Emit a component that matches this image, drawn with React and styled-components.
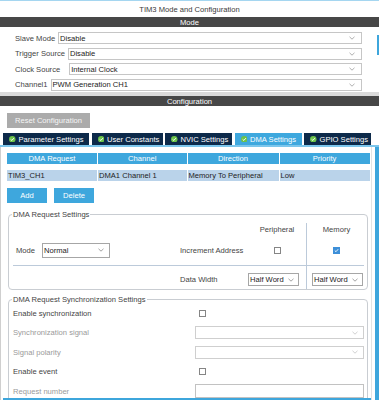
import React from "react";
import styled, { createGlobalStyle } from "styled-components";

const GlobalStyle = createGlobalStyle`
  html, body { margin: 0; padding: 0; background: #fff; }
  body {
    font-family: "Liberation Sans", Arial, sans-serif;
    font-size: 7.6px;
    color: #333;
    overflow: hidden;
  }
  * { box-sizing: border-box; }
`;

const Window = styled.div`
  width: 379px;
  height: 400px;
  overflow: hidden;
  border-top: 1px solid #a5d6f0;
  display: flex;
  flex-direction: column;
`;

const Title = styled.div`
  height: 16px;
  flex-shrink: 0;
  display: flex;
  align-items: center;
  justify-content: center;
  color: #3a3a3a;
`;

const SectionHeader = styled.div`
  height: 10px;
  flex-shrink: 0;
  background: #474747;
  color: #fff;
  display: flex;
  align-items: center;
  justify-content: center;
`;

const ModeArea = styled.div`
  display: flex;
  flex-shrink: 0;
  padding: 5px 0 1.5px 0;
`;

const ModeRows = styled.div`
  flex: 1;
  display: flex;
  flex-direction: column;
  gap: 3.5px;
  padding: 0 15px 0 15px;
`;

const ModeRow = styled.div`
  display: flex;
  align-items: center;
  height: 12px;
  gap: ${(p) => p.$gap ?? 3}px;
`;

const FieldLabel = styled.span`
  white-space: nowrap;
  color: ${(p) => (p.$muted ? "#9a9a9a" : "#444")};
`;

const ScrollThumb = styled.div`
  width: 2px;
  height: 20px;
  margin-top: 3px;
  background: #3ea6dc;
`;

const Divider = styled.div`
  height: 4px;
  flex-shrink: 0;
  background: #dadada;
`;

const ConfigBody = styled.div`
  flex: 1;
  display: flex;
  flex-direction: column;
  padding-top: 7px;
  min-height: 0;
`;

const ResetButton = styled.div`
  width: 83px;
  height: 15px;
  margin-left: 7px;
  background: #ababab;
  color: #f6f6f6;
  display: flex;
  align-items: center;
  justify-content: center;
  flex-shrink: 0;
`;

const TabBar = styled.div`
  display: flex;
  gap: 2.5px;
  margin: 5px 0 0 3px;
  height: 12px;
  flex-shrink: 0;
`;

const Tab = styled.div`
  width: ${(p) => p.$w}px;
  background: ${(p) => (p.$active ? "#3ea8de" : "#0d2a4a")};
  color: #fff;
  display: flex;
  align-items: center;
  gap: 3px;
  padding-left: 6px;
  white-space: nowrap;
`;

const TabLine = styled.div`
  height: 1.5px;
  flex-shrink: 0;
  background: #7cc6ec;
`;

const Panel = styled.div`
  flex: 1;
  display: flex;
  gap: 3px;
  min-height: 0;
`;

const PanelMain = styled.div`
  flex: 1;
  display: flex;
  flex-direction: column;
  border-left: 1px solid #cfcfcf;
  border-right: 1px solid #e3e3e3;
  min-height: 0;
`;

const Content = styled.div`
  flex: 1;
  overflow: hidden;
  padding-top: 6.5px;
`;

const HScroll = styled.div`
  height: 2.5px;
  flex-shrink: 0;
  margin-left: 2px;
  background: #3ea6dc;
`;

const VScroll = styled.div`
  width: 4px;
  background: #3ea6dc;
`;

const Table = styled.div`
  width: 362px;
  margin-left: 6px;
`;

const TableRow = styled.div`
  display: grid;
  grid-template-columns: 90px 88.5px 91px 90px;
  column-gap: 1px;
  height: 11px;
  margin-top: ${(p) => p.$mt ?? 0}px;
`;

const Cell = styled.div`
  display: flex;
  align-items: center;
  justify-content: ${(p) => (p.$head ? "center" : "flex-start")};
  padding-left: ${(p) => (p.$head ? 0 : 1)}px;
  background: ${(p) => (p.$head ? "#3ea7dd" : "#bad3ea")};
  color: ${(p) => (p.$head ? "#fff" : "#222")};
  white-space: nowrap;
`;

const ButtonRow = styled.div`
  display: flex;
  gap: 7px;
  margin: 7px 0 0 6px;
`;

const BlueButton = styled.div`
  width: ${(p) => p.$w}px;
  height: 15px;
  background: #3ea7dd;
  color: #fff;
  display: flex;
  align-items: center;
  justify-content: center;
`;

const Group = styled.fieldset`
  margin: ${(p) => p.$mt}px 0 0 7px;
  width: 360px;
  min-width: 0;
  padding: 0;
  border: 1px solid #c9cdd2;
  border-radius: 4px;
`;

const GroupTitle = styled.legend`
  padding: 0 1px;
  margin-left: 3px;
  line-height: 9px;
  color: #444;
`;

const RequestGrid = styled.div`
  display: grid;
  grid-template-columns: 171px 68px 58px 61px;
  grid-template-rows: 20px 26px 1px 23px;
`;

const GridCell = styled.div`
  display: flex;
  align-items: center;
  justify-content: ${(p) => p.$justify || "flex-start"};
  padding: ${(p) => p.$pad || "0"};
  background: ${(p) =>
    p.$sep
      ? `linear-gradient(#bccada, #bccada) 0 ${p.$sepTop || 0}px / 1px 100% no-repeat`
      : "none"};
`;

const HRule = styled.div`
  grid-column: 1 / -1;
  margin: 0 3px 0 4px;
  background: #bccada;
`;

const SyncGrid = styled.div`
  display: grid;
  grid-template-columns: 186px 1fr;
  grid-auto-rows: 19.5px;
`;

const SyncCell = styled.div`
  display: flex;
  align-items: center;
  padding-left: 4px;
`;

const SyncControl = styled.div`
  display: flex;
  align-items: center;
`;

const SelectBox = styled.div`
  width: ${(p) => (p.$w ? `${p.$w}px` : "auto")};
  flex: ${(p) => (p.$w ? "none" : 1)};
  height: ${(p) => p.$h || 12}px;
  margin-left: ${(p) => p.$ml || 0}px;
  border: 1px solid ${(p) => p.$border || "#c6c6c6"};
  background: #fff;
  display: flex;
  align-items: center;
  justify-content: space-between;
  padding: 0 ${(p) => p.$pr ?? 5}px 0 1px;
  color: #222;
  white-space: nowrap;
`;

const Check = styled.span`
  width: 7px;
  height: 7px;
  margin-left: ${(p) => p.$ml || 0}px;
  border: 1px solid ${(p) => (p.$checked ? "#3d8fd8" : "#858585")};
  background: ${(p) => (p.$checked ? "#3d8fd8" : "#fff")};
  display: flex;
  align-items: center;
  justify-content: center;
`;

const Chevron = ({ color = "#8a8a8a" }) => (
  <svg width="6" height="4" viewBox="0 0 6 4">
    <polyline points="0.5,0.8 3,3.2 5.5,0.8" fill="none" stroke={color} strokeWidth="0.8" />
  </svg>
);

const TabIcon = () => (
  <svg width="6.5" height="6.5" viewBox="0 0 6 6">
    <circle cx="3" cy="3" r="3" fill="#6cc24a" />
    <polyline points="1.5,3.1 2.6,4.1 4.5,2" fill="none" stroke="#fff" strokeWidth="0.9" />
  </svg>
);

const Select = ({ value, chevron, ...rest }) => (
  <SelectBox {...rest}>
    <span>{value}</span>
    <Chevron color={chevron} />
  </SelectBox>
);

const CheckBox = ({ checked, ml }) => (
  <Check $checked={checked} $ml={ml}>
    {checked && (
      <svg width="5" height="5" viewBox="0 0 5 5">
        <polyline points="0.8,2.6 2,3.7 4.2,1.2" fill="none" stroke="#fff" strokeWidth="0.9" />
      </svg>
    )}
  </Check>
);

const modeRows = [
  { label: "Slave Mode", value: "Disable" },
  { label: "Trigger Source", value: "Disable" },
  { label: "Clock Source", value: "Internal Clock", gap: 9 },
  { label: "Channel1", value: "PWM Generation CH1" },
];

const tabs = [
  { name: "Parameter Settings", w: 86 },
  { name: "User Constants", w: 71 },
  { name: "NVIC Settings", w: 67 },
  { name: "DMA Settings", w: 67, active: true },
  { name: "GPIO Settings", w: 67 },
];

export default function App() {
  return (
    <Window>
      <GlobalStyle />
      <Title>TIM3 Mode and Configuration</Title>
      <SectionHeader>Mode</SectionHeader>
      <ModeArea>
        <ModeRows>
          {modeRows.map((r) => (
            <ModeRow key={r.label} $gap={r.gap}>
              <FieldLabel>{r.label}</FieldLabel>
              <Select value={r.value} $h={12} $pr={6} chevron="#9a9a9a" />
            </ModeRow>
          ))}
        </ModeRows>
        <ScrollThumb />
      </ModeArea>
      <Divider />
      <SectionHeader>Configuration</SectionHeader>
      <ConfigBody>
        <ResetButton>Reset Configuration</ResetButton>
        <TabBar>
          {tabs.map((t) => (
            <Tab key={t.name} $w={t.w} $active={t.active}>
              <TabIcon />
              {t.name}
            </Tab>
          ))}
        </TabBar>
        <TabLine />
        <Panel>
          <PanelMain>
            <Content>
              <Table>
                <TableRow>
                  <Cell $head>DMA Request</Cell>
                  <Cell $head>Channel</Cell>
                  <Cell $head>Direction</Cell>
                  <Cell $head>Priority</Cell>
                </TableRow>
                <TableRow $mt={6}>
                  <Cell>TIM3_CH1</Cell>
                  <Cell>DMA1 Channel 1</Cell>
                  <Cell>Memory To Peripheral</Cell>
                  <Cell>Low</Cell>
                </TableRow>
              </Table>

              <ButtonRow>
                <BlueButton $w={40}>Add</BlueButton>
                <BlueButton $w={40}>Delete</BlueButton>
              </ButtonRow>

              <Group $mt={7}>
                <GroupTitle>DMA Request Settings</GroupTitle>
                <RequestGrid>
                  <GridCell />
                  <GridCell />
                  <GridCell $justify="center">
                    <FieldLabel>Peripheral</FieldLabel>
                  </GridCell>
                  <GridCell $justify="center" $sep $sepTop={4}>
                    <FieldLabel>Memory</FieldLabel>
                  </GridCell>

                  <GridCell $pad="0 0 4px 7px">
                    <FieldLabel>Mode</FieldLabel>
                    <Select value="Normal" $w={68} $h={15} $ml={7} $border="#a6a6a6" />
                  </GridCell>
                  <GridCell $pad="0 0 4px 0">
                    <FieldLabel>Increment Address</FieldLabel>
                  </GridCell>
                  <GridCell $pad="0 0 4px 0" $justify="center">
                    <CheckBox />
                  </GridCell>
                  <GridCell $pad="0 0 4px 0" $justify="center" $sep>
                    <CheckBox checked />
                  </GridCell>

                  <HRule />

                  <GridCell $pad="4px 0 0 0" />
                  <GridCell $pad="4px 0 0 0">
                    <FieldLabel>Data Width</FieldLabel>
                  </GridCell>
                  <GridCell $pad="4px 0 0 0">
                    <Select value="Half Word" $w={51} $h={13} $border="#a6a6a6" $pr={4} />
                  </GridCell>
                  <GridCell $pad="4px 0 0 0" $sep>
                    <Select value="Half Word" $w={51} $h={13} $ml={6} $border="#a6a6a6" $pr={4} />
                  </GridCell>
                </RequestGrid>
              </Group>

              <Group $mt={4.5}>
                <GroupTitle>DMA Request Synchronization Settings</GroupTitle>
                <SyncGrid>
                  <SyncCell>
                    <FieldLabel>Enable synchronization</FieldLabel>
                  </SyncCell>
                  <SyncControl>
                    <CheckBox ml={4} />
                  </SyncControl>

                  <SyncCell>
                    <FieldLabel $muted>Synchronization signal</FieldLabel>
                  </SyncCell>
                  <SyncControl>
                    <Select value="" $w={169} $h={13} $border="#cfcfcf" chevron="#c4c4c4" />
                  </SyncControl>

                  <SyncCell>
                    <FieldLabel $muted>Signal polarity</FieldLabel>
                  </SyncCell>
                  <SyncControl>
                    <Select value="" $w={169} $h={13} $border="#cfcfcf" chevron="#c4c4c4" />
                  </SyncControl>

                  <SyncCell>
                    <FieldLabel>Enable event</FieldLabel>
                  </SyncCell>
                  <SyncControl>
                    <CheckBox ml={4} />
                  </SyncControl>

                  <SyncCell>
                    <FieldLabel $muted>Request number</FieldLabel>
                  </SyncCell>
                  <SyncControl>
                    <SelectBox $w={169} $h={14} $border="#c2c2c2" />
                  </SyncControl>
                </SyncGrid>
              </Group>
            </Content>
            <HScroll />
          </PanelMain>
          <VScroll />
        </Panel>
      </ConfigBody>
    </Window>
  );
}
